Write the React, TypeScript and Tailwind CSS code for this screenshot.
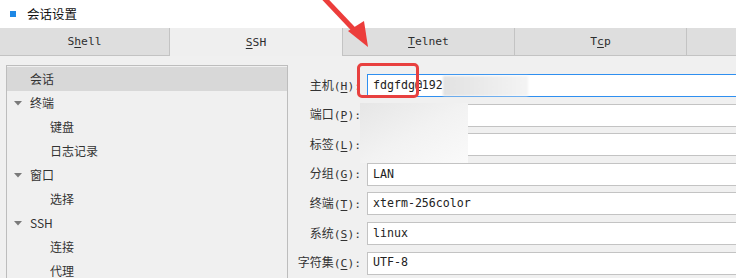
import React from "react";

const MONO = "font-['DejaVu_Sans_Mono','Liberation_Mono',monospace]";
const CJK = "font-['Noto_Sans_CJK_SC','Noto_Sans',sans-serif]";

// tabs across the top
const tabs = [
	{ pre: "S", key: "h", post: "ell", w: "w-[170px]" },
	{ pre: "", key: "S", post: "SH", w: "w-[173px]", active: true },
	{ pre: "", key: "T", post: "elnet", w: "w-[172px]" },
	{ pre: "T", key: "c", post: "p", w: "w-[172px]" },
];

// left tree items
const tree = [
	{ label: "会话", level: 0, selected: true },
	{ label: "终端", level: 0, open: true },
	{ label: "键盘", level: 1 },
	{ label: "日志记录", level: 1 },
	{ label: "窗口", level: 0, open: true },
	{ label: "选择", level: 1 },
	{ label: "SSH", level: 0, open: true },
	{ label: "连接", level: 1 },
	{ label: "代理", level: 1 },
];

// form rows
const fields = [
	{ name: "主机", key: "H", value: "fdgfdg@192", focused: true },
	{ name: "端口", key: "P", value: "" },
	{ name: "标签", key: "L", value: "" },
	{ name: "分组", key: "G", value: "LAN" },
	{ name: "终端", key: "T", value: "xterm-256color" },
	{ name: "系统", key: "S", value: "linux" },
	{ name: "字符集", key: "C", value: "UTF-8" },
];

function Caret() {
	return (
		<svg width="8" height="5" viewBox="0 0 8 5" className="shrink-0">
			<polygon points="0,0 8,0 4,4.5" fill="#7a7a7a" />
		</svg>
	);
}

function App() {
	return (
		<div className="relative w-[736px] h-[278px] overflow-hidden bg-[#f0f0f0] text-[#333]">
			{/* title */}
			<div className="h-[28px] bg-white flex items-center">
				<div className="ml-[10px] w-[6px] h-[6px] bg-[#1e88e5]" />
				<span className={`ml-[11px] text-[12.5px] text-[#111] ${CJK}`}>会话设置</span>
			</div>

			{/* tab bar */}
			<div className={`flex h-[28px] text-[11.3px] ${MONO}`}>
				{tabs.map((t, i) => (
					<div
						key={i}
						className={`${t.w} shrink-0 flex items-center justify-center pt-[2px] border-r border-[#c3c3c3] ${
							t.active ? "bg-[#efefef]" : "bg-[#dedede] border-b"
						} text-[#2e2e2e]`}
					>
						{t.pre}
						<u className="underline-offset-2">{t.key}</u>
						{t.post}
					</div>
				))}
				<div className="flex-1 bg-[#dedede] border-b border-[#c3c3c3]" />
			</div>

			<div className="flex">
				{/* tree */}
				<div className={`shrink-0 ml-[6px] mt-[9px] w-[282px] h-[240px] border border-b-0 border-[#bdbdbd] pt-px text-[12px] ${CJK}`}>
					{tree.map((n, i) => (
						<div
							key={i}
							className={`h-[24px] flex items-center ${n.selected ? "bg-[#d8d8d8]" : ""}`}
						>
							<div className="w-[23px] flex justify-end pr-[8px]">{n.open && <Caret />}</div>
							<span className={n.level === 1 ? "ml-[20px]" : ""}>{n.label}</span>
						</div>
					))}
				</div>

				{/* form */}
				<div className="mt-[18px] flex flex-col gap-[6.6px]">
					{fields.map((f, i) => (
						<div key={i} className="h-[23px] flex items-center">
							<div className={`shrink-0 w-[73px] text-right text-[12px] whitespace-nowrap ${CJK}`}>
								{f.name}
								<span className={MONO + " text-[11.3px]"}>
									(<u className="underline-offset-2">{f.key}</u>):
								</span>
							</div>
							<div
								className={`shrink-0 ml-[6px] w-[380px] h-[23px] bg-white flex items-center pl-[5px] text-[11.6px] text-[#222] ${MONO} ${
									f.focused ? "border border-[#2f8ff0]" : "border border-[#c3c3c3]"
								}`}
							>
								{f.value}
							</div>
						</div>
					))}
				</div>
			</div>

			{/* blurred bits over the fields */}
			<div className="absolute left-[443px] top-[76px] w-[85px] h-[20px] bg-gradient-to-r from-[#e2e2e2] to-[#f4f4f4] blur-[1px]" />
			<div className="absolute left-[360px] top-[103px] w-[108px] h-[60px] bg-gradient-to-br from-[#e6e6e6] via-[#f2f2f2] to-[#fafafa]" />

			{/* red highlight box */}
			<div className="absolute left-[357px] top-[63px] w-[62px] h-[35px] border-[3px] border-[#e8403f] rounded-[5px]" />

			{/* red arrow */}
			<svg className="absolute left-0 top-0" width="736" height="60" viewBox="0 0 736 60">
				<line x1="322" y1="-4" x2="358" y2="34" stroke="#ec3d3b" strokeWidth="5" />
				<polygon points="368,47 348,31 364,21" fill="#ec3d3b" />
			</svg>
		</div>
	);
}

export default App;
